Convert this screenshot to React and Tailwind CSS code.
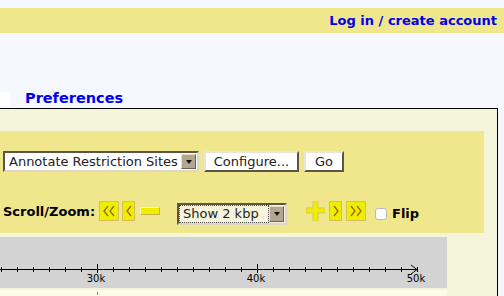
import React from 'react'

const YellowBtn = ({ children, className = '' }) => (
  <div className={`bg-[#eeee00] border border-[#d9bd5a] flex items-center justify-center ${className}`}>
    {children}
  </div>
)

const Chevron = ({ dir = 'left', double = false }) => {
  const pts = dir === 'left' ? '5,2 1,7 5,12' : '1,2 5,7 1,12'
  return (
    <svg width={double ? 12 : 6} height="14" viewBox={double ? '0 0 12 14' : '0 0 6 14'}>
      <polyline points={pts} fill="none" stroke="#9a6a00" strokeWidth="1.3" />
      {double && (
        <polyline
          points={dir === 'left' ? '11,2 7,7 11,12' : '7,2 11,7 7,12'}
          fill="none"
          stroke="#9a6a00"
          strokeWidth="1.3"
        />
      )}
    </svg>
  )
}

const FakeSelect = ({ label, className = '', focused = false, bg = 'bg-white' }) => (
  <div
    className={`flex items-stretch border-2 border-t-[#5f5545] border-l-[#5f5545] border-b-[#ddd6c0] border-r-[#ddd6c0] ${bg} ${className}`}
  >
    <div className={`flex-1 flex items-center pl-[4px] text-[#222] ${focused ? 'outline-1 outline-dotted outline-[#444] -outline-offset-1' : ''}`}>
      {label}
    </div>
    <div className="w-[15px] my-[1px] mr-[1px] bg-[#b3a691] border border-t-[#e6ddc8] border-l-[#e6ddc8] border-b-[#6b604d] border-r-[#6b604d] flex items-center justify-center">
      <svg width="6" height="4" viewBox="0 0 6 4">
        <polygon points="0,0 6,0 3,4" fill="#111" />
      </svg>
    </div>
  </div>
)

const Button = ({ children, className = '' }) => (
  <div
    className={`bg-white flex items-center justify-center text-[#222] border-2 border-t-[#e9e4d6] border-l-[#e9e4d6] border-b-[#5f5545] border-r-[#5f5545] ${className}`}
  >
    {children}
  </div>
)

const Ruler = () => {
  const minor = []
  for (let x = 1; x <= 417; x += 16) minor.push(x)
  return (
    <svg width="447" height="51" viewBox="0 0 447 51" className="block">
      <line x1="0" y1="32.5" x2="417" y2="32.5" stroke="#000" strokeWidth="1" />
      {minor.map((x) => (
        <line key={x} x1={x + 0.5} y1="30" x2={x + 0.5} y2="35" stroke="#000" strokeWidth="1" />
      ))}
      {[97, 257].map((x) => (
        <line key={x} x1={x + 0.5} y1="27" x2={x + 0.5} y2="36" stroke="#000" strokeWidth="1" />
      ))}
      <polyline points="411,28 417,32.5 411,37" fill="none" stroke="#000" strokeWidth="1" />
      {[
        [96, '30k'],
        [256, '40k'],
        [416, '50k'],
      ].map(([x, t]) => (
        <text key={t} x={x} y="45" textAnchor="middle" fontSize="10" fontFamily="'DejaVu Sans', sans-serif" fill="#000">
          {t}
        </text>
      ))}
    </svg>
  )
}

export default function App() {
  return (
    <div className="w-[504px] h-[296px] overflow-hidden bg-[#f5f8fe] font-['DejaVu_Sans',sans-serif]">
      <div className="h-[8px]" />
      <div className="h-[25px] bg-[#f0e68c] flex items-center justify-end pr-[7px]">
        <span className="text-[13px] font-bold text-[#0000ee]">Log in / create account</span>
      </div>

      <div className="h-[56px]" />

      <div className="flex items-center h-[19px]">
        <div className="w-[10px] h-[14px] bg-white" />
        <span className="ml-[15px] text-[14.5px] font-bold text-[#0000ee]">Preferences</span>
      </div>

      <div className="mr-[6px] border-t border-r border-b border-black bg-[#f5f5dc] pt-[22px]">
        <div className="mr-[13px] h-[102px] bg-[#f0e68c] pt-[20px] pl-[3px]">
          <div className="flex items-center gap-[5px] h-[21px] text-[13px]">
            <FakeSelect label="Annotate Restriction Sites" className="w-[196px] h-[21px]" />
            <Button className="w-[95px] h-[21px]">Configure...</Button>
            <Button className="w-[40px] h-[21px]">Go</Button>
          </div>

          <div className="flex items-center h-[22px] mt-[28px]">
            <span className="text-[13px] font-bold text-black w-[96px] mt-[2px]">Scroll/Zoom:</span>
            <YellowBtn className="w-[20px] h-[20px]">
              <Chevron dir="left" double />
            </YellowBtn>
            <YellowBtn className="w-[13px] h-[20px] ml-[3px]">
              <Chevron dir="left" />
            </YellowBtn>
            <div className="w-[20px] h-[8px] ml-[5px] bg-[#eeee00] border-t border-l border-[#fff6b0] border-b border-r border-b-[#c9b14e] border-r-[#c9b14e]" />
            <FakeSelect
              label="Show 2 kbp"
              focused
              bg="bg-[#f8f4dc]"
              className="w-[110px] h-[22px] ml-[17px] text-[13px] mt-[6px]"
            />
            <svg width="19" height="20" viewBox="0 0 19 20" className="ml-[19px]">
              <path d="M7 0h5v7h7v5h-7v8h-5v-8h-7v-5h7z" fill="#eeee00" stroke="#d9bd5a" strokeWidth="0.8" />
            </svg>
            <YellowBtn className="w-[13px] h-[20px] ml-[4px]">
              <Chevron dir="right" />
            </YellowBtn>
            <YellowBtn className="w-[20px] h-[20px] ml-[4px]">
              <Chevron dir="right" double />
            </YellowBtn>
            <div className="w-[12px] h-[12px] ml-[9px] mt-[5px] bg-white border border-[#b8b8b8] rounded-[3px]" />
            <span className="ml-[5px] mt-[5px] text-[13px] font-bold text-black">Flip</span>
          </div>
        </div>

        <div className="mt-[4px] w-[447px] h-[51px] bg-[#d3d3d3]">
          <Ruler />
        </div>
        <div className="mt-[2px] w-[447px] h-[20px] bg-[#fcfce8] relative">
          <div className="absolute left-[97px] top-[2px] w-px h-[3px] bg-[#888]" />
        </div>
      </div>
    </div>
  )
}
